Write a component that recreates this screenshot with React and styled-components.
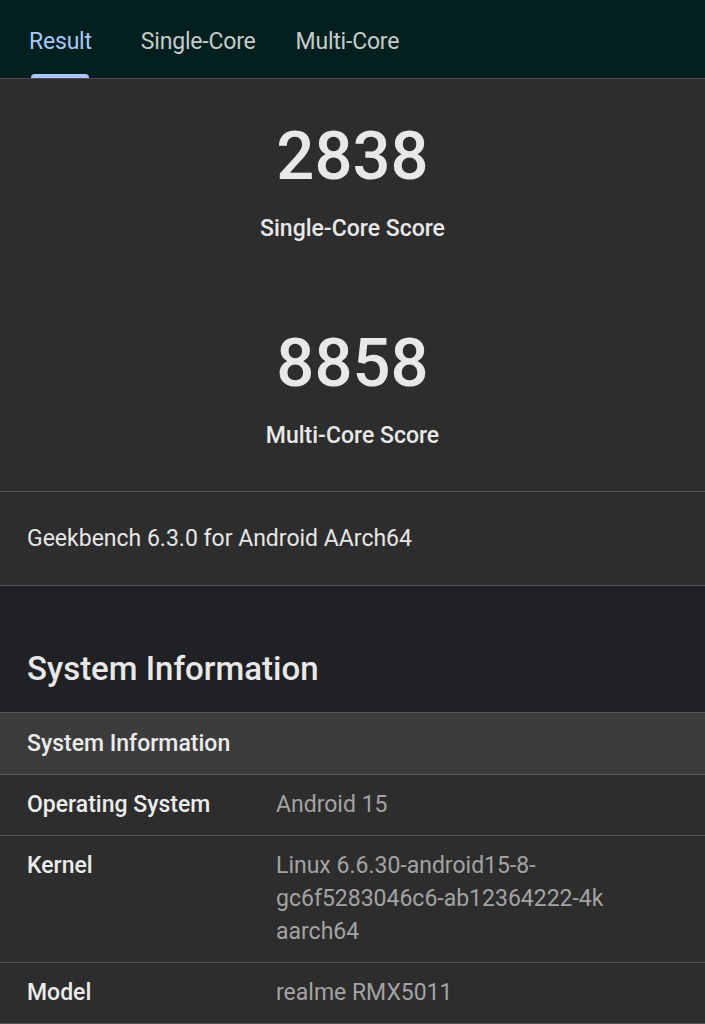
import React from "react";
import styled, { createGlobalStyle } from "styled-components";

const Global = createGlobalStyle`
  html, body { margin: 0; padding: 0; background: #2d2d2d; }
  body { font-family: Roboto, "Noto Sans", sans-serif; -webkit-font-smoothing: antialiased; }
  * { box-sizing: border-box; }
`;

const Page = styled.div`
  width: 705px;
  min-height: 1024px;
  background: #2d2d2d;
  overflow: hidden;
`;

const TabBar = styled.nav`
  height: 79px;
  background: #03201f;
  border-bottom: 1px solid #4f4f4f;
  display: flex;
  align-items: stretch;
  padding-left: 29px;
`;

const Tab = styled.div`
  position: relative;
  display: flex;
  align-items: center;
  padding-top: 4px;
  margin-right: ${(p) => p.$space || 0}px;
  font-size: 23px;
  font-weight: 400;
  letter-spacing: -0.2px;
  color: ${(p) => (p.$active ? "#a8c7fa" : "#c6cbcb")};
  &::after {
    content: "";
    display: ${(p) => (p.$active ? "block" : "none")};
    position: absolute;
    left: 2px;
    right: 3px;
    bottom: 0;
    height: 4px;
    border-radius: 4px 4px 0 0;
    background: #a8c7fa;
  }
`;

const Scores = styled.section`
  display: flex;
  flex-direction: column;
  align-items: center;
  padding: 37px 0 41px;
  gap: 80px;
  border-bottom: 1px solid #555;
`;

const ScoreBlock = styled.div`
  display: flex;
  flex-direction: column;
  align-items: center;
`;

const ScoreValue = styled.div`
  font-size: 67px;
  font-weight: 500;
  line-height: 80px;
  color: #e8e8e8;
`;

const ScoreLabel = styled.div`
  margin-top: 19px;
  font-size: 23px;
  font-weight: 500;
  line-height: 28px;
  color: #e8e8e8;
`;

const Version = styled.div`
  height: 94px;
  display: flex;
  align-items: center;
  padding: 0 27px;
  font-size: 23px;
  color: #e6e6e6;
  border-bottom: 1px solid #555;
`;

const SectionHead = styled.h2`
  margin: 0;
  height: 127px;
  background: #202124;
  display: flex;
  align-items: flex-end;
  padding: 0 27px 24px;
  font-size: 33px;
  font-weight: 500;
  color: #e8e8e8;
  border-bottom: 1px solid #555;
`;

const TableHead = styled.div`
  height: 62px;
  background: #3c3c3c;
  display: flex;
  align-items: center;
  padding: 0 27px;
  font-size: 23px;
  font-weight: 500;
  color: #ececec;
  border-bottom: 1px solid #555;
`;

const Row = styled.div`
  display: grid;
  grid-template-columns: 249px 1fr;
  padding: 13px 27px 14px;
  font-size: 23px;
  line-height: 33px;
  border-bottom: 1px solid #555;
`;

const Key = styled.div`
  font-weight: 500;
  color: #ececec;
`;

const Val = styled.div`
  color: #a3a3a3;
  white-space: nowrap;
`;

const rows = [
  ["Operating System", "Android 15"],
  ["Kernel", "Linux 6.6.30-android15-8-\ngc6f5283046c6-ab12364222-4k\naarch64"],
  ["Model", "realme RMX5011"],
];

export default function App() {
  return (
    <Page>
      <Global />
      <TabBar>
        <Tab $active $space={49}>Result</Tab>
        <Tab $space={40}>Single-Core</Tab>
        <Tab>Multi-Core</Tab>
      </TabBar>
      <Scores>
        <ScoreBlock>
          <ScoreValue>2838</ScoreValue>
          <ScoreLabel>Single-Core Score</ScoreLabel>
        </ScoreBlock>
        <ScoreBlock>
          <ScoreValue>8858</ScoreValue>
          <ScoreLabel>Multi-Core Score</ScoreLabel>
        </ScoreBlock>
      </Scores>
      <Version>Geekbench 6.3.0 for Android AArch64</Version>
      <SectionHead>System Information</SectionHead>
      <TableHead>System Information</TableHead>
      {rows.map(([k, v]) => (
        <Row key={k}>
          <Key>{k}</Key>
          <Val>
            {v.split("\n").map((l, i) => (
              <div key={i}>{l}</div>
            ))}
          </Val>
        </Row>
      ))}
    </Page>
  );
}
